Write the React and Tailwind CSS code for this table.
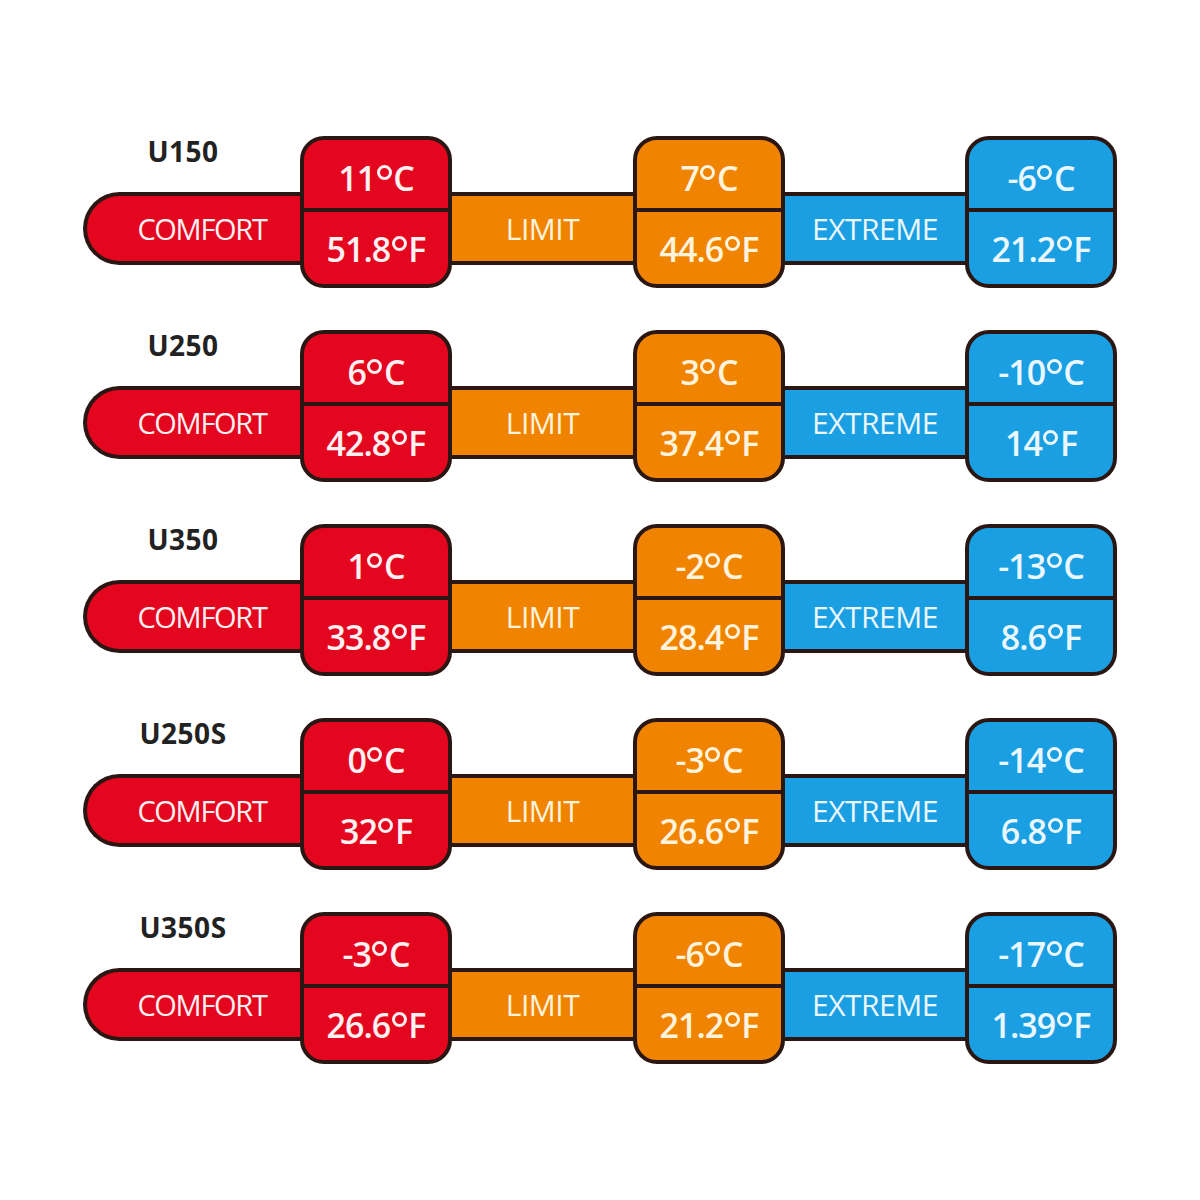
import React from 'react';

const ROWS = [
  { name: 'U150', comfort: ['11', 'C', '51.8', 'F'], limit: ['7', 'C', '44.6', 'F'], extreme: ['-6', 'C', '21.2', 'F'] },
  { name: 'U250', comfort: ['6', 'C', '42.8', 'F'], limit: ['3', 'C', '37.4', 'F'], extreme: ['-10', 'C', '14', 'F'] },
  { name: 'U350', comfort: ['1', 'C', '33.8', 'F'], limit: ['-2', 'C', '28.4', 'F'], extreme: ['-13', 'C', '8.6', 'F'] },
  { name: 'U250S', comfort: ['0', 'C', '32', 'F'], limit: ['-3', 'C', '26.6', 'F'], extreme: ['-14', 'C', '6.8', 'F'] },
  { name: 'U350S', comfort: ['-3', 'C', '26.6', 'F'], limit: ['-6', 'C', '21.2', 'F'], extreme: ['-17', 'C', '1.39', 'F'] },
];

const font = { fontFamily: '"Open Sans", "Noto Sans", sans-serif' };

// number + big degree ring + unit
const Temp = ({ num, unit }) => (
  <span className="flex items-start leading-none">
    {num}
    <span className="inline-block w-[15px] h-[15px] rounded-full border-[3px] border-current mt-[4px] mx-[1.5px]" />
    {unit}
  </span>
);

/* ── Two-line temperature box ─────────────────────────────────────── */
const TempBox = ({ bg, text, v }) => (
  <div className={`w-[152px] h-[152px] shrink-0 rounded-[24px] border-4 border-[#2a1612] ${bg} flex flex-col overflow-hidden relative z-10 font-semibold`}>
    <div className={`h-[72px] border-b-4 border-[#2a1612] flex items-center justify-center pt-[8px] text-[34px] tracking-[-1px] ${text}`}>
      <Temp num={v[0]} unit={v[1]} />
    </div>
    <div className={`flex-1 flex items-center justify-center pt-[2px] text-[34px] tracking-[-1px] ${text}`}>
      <Temp num={v[2]} unit={v[3]} />
    </div>
  </div>
);

/* ── Bar section between boxes ────────────────────────────────────── */
const Bar = ({ bg, text, label, width }) => (
  <div className={`${width} h-[73px] mt-[56px] shrink-0 border-y-4 border-[#2a1612] ${bg} flex items-center justify-center text-[30px] leading-none tracking-[-0.5px] ${text}`}>
    {label}
  </div>
);

const Row = ({ row }) => (
  <div className="flex items-start">
    <div className="w-[217px] shrink-0 flex flex-col">
      <div className="h-[56px] pr-[17px] pt-[1px] flex justify-center text-[28px] font-bold leading-none text-[#222] tracking-[0.5px]">
        {row.name}
      </div>
      <div className="h-[73px] w-[222px] rounded-l-full border-4 border-r-0 border-[#2a1612] bg-[#e4061e] flex items-center justify-center pl-[12px] text-[29px] leading-none tracking-[-1.3px] text-[#fff0f2]">
        COMFORT
      </div>
    </div>
    <TempBox bg="bg-[#e4061e]" text="text-[#fff0f2]" v={row.comfort} />
    <Bar bg="bg-[#f08400]" text="text-[#fff3dc]" label="LIMIT" width="w-[181px]" />
    <TempBox bg="bg-[#f08400]" text="text-[#fff3dc]" v={row.limit} />
    <Bar bg="bg-[#1a9fe2]" text="text-[#eaf7ff]" label="EXTREME" width="w-[180px]" />
    <TempBox bg="bg-[#1a9fe2]" text="text-[#eaf7ff]" v={row.extreme} />
  </div>
);

export default function App() {
  return (
    <div className="w-[1200px] h-[1200px] bg-white pl-[83px] pt-[136px] flex flex-col gap-[42px]" style={font}>
      {ROWS.map(r => <Row key={r.name} row={r} />)}
    </div>
  );
}
